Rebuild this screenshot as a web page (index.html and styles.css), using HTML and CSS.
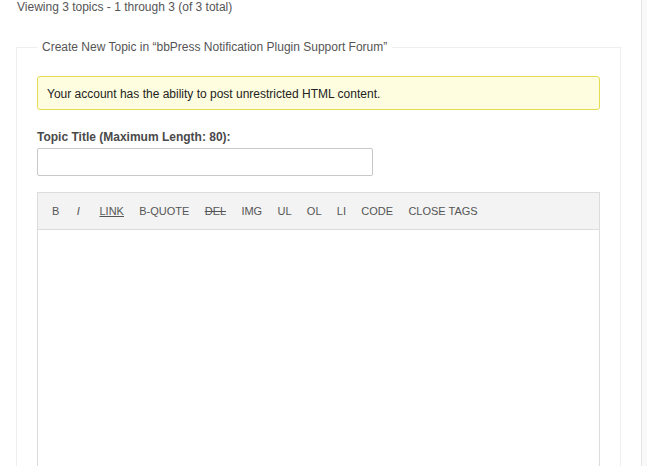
FILE: index.html
```html
<!DOCTYPE html>
<html>
<head>
<meta charset="utf-8">
<link rel="stylesheet" href="styles.css">
</head>
<body>
<div class="page">
  <main class="content">
    <div class="pagination-count">Viewing 3 topics - 1 through 3 (of 3 total)</div>
    <fieldset class="topic-form">
      <legend>Create New Topic in “bbPress Notification Plugin Support Forum”</legend>
      <div class="notice">Your account has the ability to post unrestricted HTML content.</div>
      <label class="field-label" for="topic-title">Topic Title (Maximum Length: 80):</label>
      <input class="title-input" id="topic-title" type="text">
      <div class="editor">
        <div class="toolbar">
          <span class="btn btn-b">B</span>
          <span class="btn btn-i">I</span>
          <span class="btn underline">LINK</span>
          <span class="btn">B-QUOTE</span>
          <span class="btn strike">DEL</span>
          <span class="btn">IMG</span>
          <span class="btn">UL</span>
          <span class="btn">OL</span>
          <span class="btn">LI</span>
          <span class="btn">CODE</span>
          <span class="btn">CLOSE TAGS</span>
        </div>
        <div class="text-area"></div>
      </div>
    </fieldset>
  </main>
  <aside class="sidebar"></aside>
</div>
</body>
</html>
```
FILE: styles.css
```css
html, body {
  margin: 0;
  padding: 0;
  background: #fff;
  height: 100%;
  overflow: hidden;
}
body {
  font-family: "Liberation Sans", Arial, sans-serif;
  font-size: 12px;
  color: #555;
}
.page {
  display: flex;
  height: 466px;
}
.content {
  width: 641px;
  box-sizing: border-box;
  padding: 0 0 0 16px;
}
.sidebar {
  flex: 1;
  border-left: 1px solid #e6e6e6;
  background: #f9f9f9;
}
.pagination-count {
  line-height: 14px;
  margin: 0 0 0 1px;
}
.topic-form {
  margin: 24px 0 0 0;
  width: 605px;
  box-sizing: border-box;
  border: 1px solid #eee;
  padding: 20px 20px 0 20px;
  height: 600px;
}
.topic-form legend {
  padding: 0 5px;
  line-height: 18px;
  color: #555;
}
.notice {
  background: #fffddf;
  border: 1px solid #e6db55;
  border-radius: 3px;
  padding: 9px 9px 7px 9px;
  line-height: 16px;
  color: #222;
}
.field-label {
  display: block;
  font-weight: bold;
  margin-top: 19px;
  line-height: 16px;
  color: #4a4a4a;
}
.title-input {
  display: block;
  margin: 3px 0 0 0;
  width: 336px;
  height: 28px;
  box-sizing: border-box;
  border: 1px solid #c8c8c8;
  border-radius: 2px;
  padding: 0 6px;
  font: inherit;
  background: #fff;
}
.editor {
  margin-top: 16px;
  border: 1px solid #dcdcdc;
}
.toolbar {
  display: flex;
  gap: 15.3px;
  background: #f3f3f3;
  border-bottom: 1px solid #dcdcdc;
  padding: 0 0 0 14px;
  height: 36px;
  align-items: center;
  font-size: 11px;
  color: #555;
}
.btn {
  line-height: 14px;
}
.btn-b {
  margin-right: 2px;
}
.btn-i {
  font-style: italic;
  margin-right: 4.5px;
}
.underline {
  text-decoration: underline;
}
.strike {
  text-decoration: line-through;
}
.text-area {
  height: 400px;
  background: #fff;
}
```
